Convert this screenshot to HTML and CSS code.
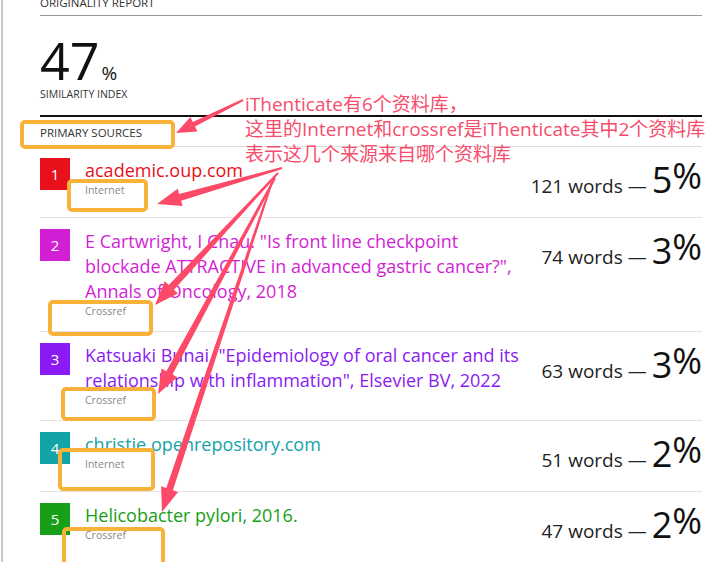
FILE: index.html
```html
<!DOCTYPE html>
<html lang="zh-CN">
<head>
    <meta charset="UTF-8">
    <meta name="viewport" content="width=device-width, initial-scale=1.0">
    <title>Originality Report</title>
    <link rel="stylesheet" href="styles.css">
</head>
<body>

    <div class="report">
        <div class="report-title">ORIGINALITY REPORT</div>

        <div class="summary">
            <div class="index">47<span class="index-pct">%</span></div>
            <div class="index-label">SIMILARITY INDEX</div>
        </div>

        <div class="sources-title">PRIMARY SOURCES</div>

        <ul class="sources">
            <li class="source tone-red">
                <span class="badge">1</span>
                <div class="info">
                    <div class="name">academic.oup.com</div>
                    <div class="kind">Internet</div>
                </div>
                <div class="match">121 words — <span class="share">5<span class="share-pct">%</span></span></div>
            </li>
            <li class="source tone-magenta">
                <span class="badge">2</span>
                <div class="info">
                    <div class="name">E Cartwright, I Chau. "Is front line checkpoint blockade ATTRACTIVE in advanced gastric cancer?", Annals of Oncology, 2018</div>
                    <div class="kind">Crossref</div>
                </div>
                <div class="match">74 words — <span class="share">3<span class="share-pct">%</span></span></div>
            </li>
            <li class="source tone-purple">
                <span class="badge">3</span>
                <div class="info">
                    <div class="name">Katsuaki Bunai. "Epidemiology of oral cancer and its relationship with inflammation", Elsevier BV, 2022</div>
                    <div class="kind">Crossref</div>
                </div>
                <div class="match">63 words — <span class="share">3<span class="share-pct">%</span></span></div>
            </li>
            <li class="source tone-teal">
                <span class="badge">4</span>
                <div class="info">
                    <div class="name">christie.openrepository.com</div>
                    <div class="kind">Internet</div>
                </div>
                <div class="match">51 words — <span class="share">2<span class="share-pct">%</span></span></div>
            </li>
            <li class="source tone-green">
                <span class="badge">5</span>
                <div class="info">
                    <div class="name">Helicobacter pylori, 2016.</div>
                    <div class="kind">Crossref</div>
                </div>
                <div class="match">47 words — <span class="share">2<span class="share-pct">%</span></span></div>
            </li>
        </ul>
    </div>

    <!-- annotation layer drawn over the report -->
    <div class="notes">
        <svg class="marks" width="720" height="562" viewBox="0 0 720 562">
            <g class="boxes">
                <rect x="22" y="122" width="151" height="25" rx="3"/>
                <rect x="69" y="181" width="77" height="29" rx="3"/>
                <rect x="50" y="302" width="101" height="32" rx="3"/>
                <rect x="63" y="389" width="91" height="30" rx="3"/>
                <rect x="60" y="450" width="93" height="39" rx="3"/>
                <rect x="64" y="529" width="99" height="60" rx="3"/>
            </g>
            <g class="arrows">
                <polygon points="242.6,99.1 192.8,122.0 190.4,117.0 176,133 197.4,131.4 195.0,126.4 243.4,100.9"/>
                <polygon points="281.7,167.0 179.1,194.0 177.6,188.8 157,204 182.6,206.0 181.1,200.8 282.3,169.0"/>
                <polygon points="277.3,172.3 168.8,285.0 164.8,281.3 155,305 178.0,293.5 174.0,289.8 278.7,173.7"/>
                <polygon points="274.1,177.5 166.3,371.2 161.5,368.6 158,394 177.3,377.2 172.5,374.6 275.9,178.5"/>
                <polygon points="271.1,181.7 166.3,488.1 161.1,486.3 162,512 178.1,492.1 172.9,490.3 272.9,182.3"/>
            </g>
        </svg>
        <div class="note-text">
            <div>iThenticate有6个资料库，</div>
            <div>这里的Internet和crossref是iThenticate其中2个资料库</div>
            <div>表示这几个来源来自哪个资料库</div>
        </div>
    </div>

</body>
</html>
```

FILE: styles.css
```css
html, body {
    margin: 0;
    padding: 0;
    height: 100%;
    overflow: hidden;
    background: #fff;
}
body {
    position: relative;
    font-family: "Open Sans", "Noto Sans", sans-serif;
    color: #222;
}
.report {
    margin-left: 1px;
    border-left: 2px solid #c9c9c9;
    padding: 0 18px 0 37px;
    min-height: 100%;
}
.report-title {
    margin-top: -4px;
    padding-bottom: 5px;
    border-bottom: 1px solid #999;
    font-size: 11.5px;
    line-height: 14px;
    color: #333;
}
.summary {
    padding-bottom: 14px;
    border-bottom: 2px solid #111;
}
.index {
    margin-top: 18px;
    font-size: 52px;
    line-height: 52px;
    color: #111;
}
.index-pct {
    font-size: 19px;
    line-height: 1;
    margin-left: 2px;
}
.index-label {
    margin-top: 1px;
    font-size: 10.5px;
    line-height: 14px;
    color: #333;
}
.sources-title {
    padding: 9px 0 6px;
    border-bottom: 1px solid #dcdcdc;
    font-size: 11.5px;
    line-height: 14px;
    color: #333;
}
.sources {
    list-style: none;
    margin: 0;
    padding: 0;
}
.source {
    display: flex;
    align-items: flex-start;
    padding: 11px 0 12px;
    border-bottom: 1px solid #e4e4e4;
    color: var(--tone);
}
.tone-red { --tone: #e8101a; }
.tone-magenta { --tone: #d21fd5; }
.tone-purple { --tone: #8b1af5; }
.tone-teal { --tone: #13a4a8; }
.tone-green { --tone: #17a017; }
.badge {
    flex-shrink: 0;
    width: 30px;
    height: 32px;
    margin-right: 15px;
    background: var(--tone);
    color: #fff;
    font-size: 15px;
    line-height: 32px;
    text-align: center;
}
.info {
    width: 436px;
}
.name {
    font-size: 18px;
    line-height: 25px;
}
.kind {
    font-size: 10.5px;
    line-height: 15px;
    color: #888;
}
.match {
    margin-left: auto;
    height: 47px;
    white-space: nowrap;
    font-size: 19px;
    line-height: 40px;
    color: #222;
}
.share {
    font-size: 36px;
    line-height: 40px;
    color: #111;
}
.share-pct {
    vertical-align: 4px;
    line-height: 1;
}
.notes {
    position: absolute;
    left: 0;
    top: 0;
    width: 720px;
    height: 562px;
    pointer-events: none;
}
.marks {
    position: absolute;
    left: 0;
    top: 0;
}
.boxes rect {
    fill: none;
    stroke: #f8b23a;
    stroke-width: 4;
}
.arrows polygon {
    fill: #fc4a68;
}
.note-text {
    position: absolute;
    left: 245px;
    top: 92px;
    font-family: "Open Sans", "Noto Sans CJK SC", sans-serif;
    font-size: 19px;
    line-height: 25px;
    color: #f74d6c;
    white-space: nowrap;
}
```
